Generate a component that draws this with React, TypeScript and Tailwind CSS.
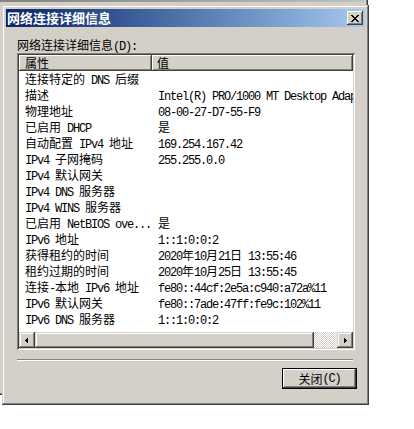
import React from 'react'

const CJK = /[\u3000-\u9fff\uff00-\uffef]/

// SimSun look-alike: CJK glyphs 12px wide, Latin glyphs 6px wide
function Mixed({ text }: { text: string }) {
  const parts = text.split(/([\u3000-\u9fff\uff00-\uffef]+)/).filter(Boolean)
  return (
    <>
      {parts.map((p, i) =>
        CJK.test(p) ? (
          <span key={i} className="font-['Noto_Sans_CJK_SC',sans-serif] text-[12px]">
            {p}
          </span>
        ) : (
          <span key={i} className="font-['Liberation_Mono',monospace] text-[12px] tracking-[-1.2px] whitespace-pre">
            {p}
          </span>
        )
      )}
    </>
  )
}

const rows: [string, string][] = [
  ['连接特定的 DNS 后缀', ''],
  ['描述', 'Intel(R) PRO/1000 MT Desktop Adapter'],
  ['物理地址', '08-00-27-D7-55-F9'],
  ['已启用 DHCP', '是'],
  ['自动配置 IPv4 地址', '169.254.167.42'],
  ['IPv4 子网掩码', '255.255.0.0'],
  ['IPv4 默认网关', ''],
  ['IPv4 DNS 服务器', ''],
  ['IPv4 WINS 服务器', ''],
  ['已启用 NetBIOS ove...', '是'],
  ['IPv6 地址', '1::1:0:0:2'],
  ['获得租约的时间', '2020年10月21日 13:55:46'],
  ['租约过期的时间', '2020年10月25日 13:55:45'],
  ['连接-本地 IPv6 地址', 'fe80::44cf:2e5a:c940:a72a%11'],
  ['IPv6 默认网关', 'fe80::7ade:47ff:fe9c:102%11'],
  ['IPv6 DNS 服务器', '1::1:0:0:2'],
]

function CloseX() {
  return (
    <svg width="8" height="7" viewBox="0 0 8 7" shapeRendering="crispEdges">
      <path
        d="M0 0h2v1H0zM6 0h2v1H6zM1 1h2v1H1zM5 1h2v1H5zM2 2h4v1H2zM3 3h2v1H3zM2 4h4v1H2zM1 5h2v1H1zM5 5h2v1H5zM0 6h2v1H0zM6 6h2v1H6z"
        fill="#000"
      />
    </svg>
  )
}

function Arrow({ dir }: { dir: 'left' | 'right' }) {
  return (
    <svg width="4" height="7" viewBox="0 0 4 7" shapeRendering="crispEdges">
      <path d={dir === 'left' ? 'M3 0v7L0 3.5z' : 'M1 0v7L4 3.5z'} fill="#000" />
    </svg>
  )
}

export default function App() {
  return (
    <div className="relative w-[414px] h-[429px] overflow-hidden bg-white text-black text-[12px] font-['Noto_Sans_CJK_SC',sans-serif]">
      {/* window behind the dialog */}
      <div className="absolute left-[-20px] top-[-20px] w-[388px] h-[415px] bg-[#d4d0c8] p-[4px] shadow-[inset_-1px_-1px_#404040,inset_1px_1px_#d4d0c8,inset_-2px_-2px_#808080,inset_2px_2px_#ffffff]">
        <div className="h-[18px] bg-gradient-to-r from-[#808080] to-[#c0c0c0]" />
      </div>

      {/* dialog */}
      <div className="absolute left-[2px] top-[5px] w-[367px] h-[400px] bg-[#d4d0c8] p-[4px] flex flex-col shadow-[inset_-1px_-1px_#404040,inset_1px_1px_#d4d0c8,inset_-2px_-2px_#808080,inset_2px_2px_#ffffff]">
        {/* title bar */}
        <div className="h-[18px] flex items-center justify-between pl-[1px] pr-[2px] bg-gradient-to-r from-[#0a246a] to-[#a6caf0]">
          <span className="text-white font-bold text-[13px] leading-[18px]">网络连接详细信息</span>
          <div className="w-[16px] h-[14px] bg-[#d4d0c8] flex items-center justify-center shadow-[inset_-1px_-1px_#404040,inset_1px_1px_#ffffff,inset_-2px_-2px_#808080]">
            <CloseX />
          </div>
        </div>

        <div className="flex-1 flex flex-col pl-[11px] pr-[10px] pt-[10px]">
          <div className="h-[16px] leading-[16px]">
            <Mixed text="网络连接详细信息(D):" />
          </div>

          {/* list view */}
          <div className="h-[297px] p-[2px] flex flex-col shadow-[inset_1px_1px_#808080,inset_-1px_-1px_#ffffff,inset_2px_2px_#404040,inset_-2px_-2px_#d4d0c8]">
            <div className="flex-1 flex flex-col bg-white overflow-hidden">
              <div className="h-[16px] flex bg-[#d4d0c8] leading-[15px]">
                <div className="w-[133px] pl-[6px] shadow-[inset_-1px_-1px_#404040,inset_1px_1px_#ffffff,inset_-2px_-2px_#808080]">
                  <Mixed text="属性" />
                </div>
                <div className="flex-1 pl-[5px] shadow-[inset_-1px_-1px_#404040,inset_1px_1px_#ffffff,inset_-2px_-2px_#808080]">
                  <Mixed text="值" />
                </div>
              </div>

              <div className="flex-1 overflow-hidden">
                {rows.map(([k, v], i) => (
                  <div key={i} className="h-[16px] flex leading-[16px] whitespace-nowrap">
                    <div className="w-[133px] shrink-0 pl-[6px] overflow-hidden">
                      <Mixed text={k} />
                    </div>
                    <div className="flex-1 pl-[6px] overflow-hidden">
                      <Mixed text={v} />
                    </div>
                  </div>
                ))}
              </div>

              {/* horizontal scrollbar */}
              <div className="h-[16px] flex">
                <div className="w-[16px] bg-[#d4d0c8] flex items-center justify-center shadow-[inset_-1px_-1px_#404040,inset_1px_1px_#d4d0c8,inset_-2px_-2px_#808080,inset_2px_2px_#ffffff]">
                  <Arrow dir="left" />
                </div>
                <div className="w-[279px] bg-[#d4d0c8] shadow-[inset_-1px_-1px_#404040,inset_1px_1px_#d4d0c8,inset_-2px_-2px_#808080,inset_2px_2px_#ffffff]" />
                <div className="flex-1 bg-[repeating-conic-gradient(#d4d0c8_0%_25%,#ffffff_0%_50%)] bg-[length:2px_2px]" />
                <div className="w-[16px] bg-[#d4d0c8] flex items-center justify-center shadow-[inset_-1px_-1px_#404040,inset_1px_1px_#d4d0c8,inset_-2px_-2px_#808080,inset_2px_2px_#ffffff]">
                  <Arrow dir="right" />
                </div>
              </div>
            </div>
          </div>

          {/* separator */}
          <div className="mt-[9px] mr-[2px] h-[2px] border-t border-t-[#808080] border-b border-b-white" />

          {/* close button */}
          <div className="mt-[7px] ml-auto mr-[-2px] w-[75px] h-[21px] bg-[#d4d0c8] flex items-center justify-center leading-[16px] shadow-[inset_0_0_0_1px_#000000,inset_-2px_-2px_#404040,inset_2px_2px_#ffffff,inset_-3px_-3px_#808080]">
            <Mixed text="关闭(C)" />
          </div>
        </div>
      </div>
    </div>
  )
}
